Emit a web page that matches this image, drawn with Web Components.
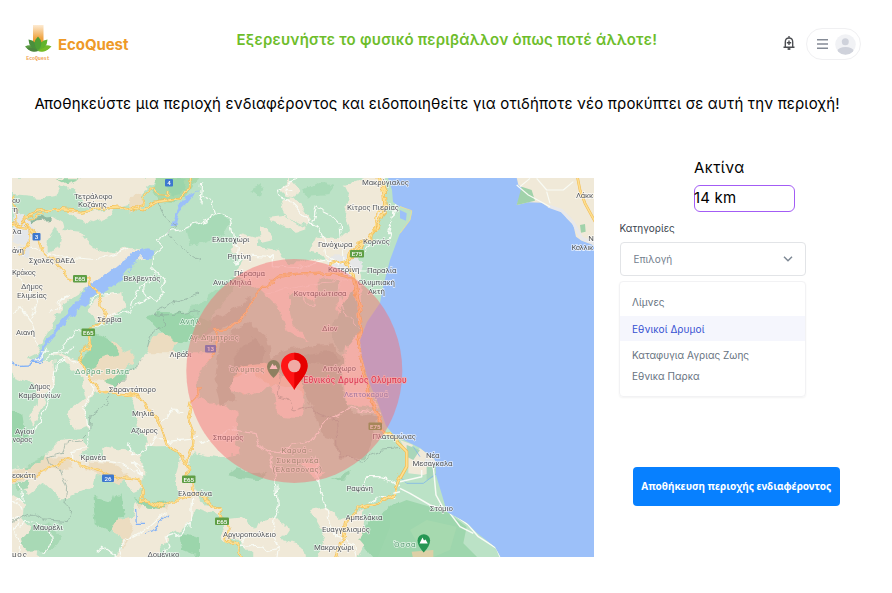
<!DOCTYPE html>
<html lang="el">
<head>
<meta charset="utf-8">
<title>EcoQuest</title>
<style>
html,body{margin:0;background:#fff;width:892px;height:593px;overflow:hidden;font-family:Inter,"Liberation Sans",sans-serif;color:#000}
</style>
</head>
<body>
<eco-page></eco-page>
<script>
const define=(name,html)=>customElements.define(name,class extends HTMLElement{
  constructor(){super();this.attachShadow({mode:"open"}).innerHTML=html;}
});

define("eco-brand",`<style>
:host{display:flex;align-items:center;gap:6px}
svg{display:block;margin-top:-3px}
b{font-size:15px;font-weight:700;color:#ee9a28;letter-spacing:-.08px;line-height:20px}
</style>
<svg width="28" height="38" viewBox="0 0 28 38">
<defs><linearGradient id="g" x1="0" y1="0" x2="0" y2="1"><stop offset="0" stop-color="#fdebd3"/><stop offset=".65" stop-color="#f0a544"/><stop offset="1" stop-color="#ec9420"/></linearGradient></defs>
<rect x="9" y="1" width="10.500" height="20" fill="url(#g)"/>
<path d="M1 22.500Q8 18.500 14 27Q6 28.500 1 22.500Z" fill="#5a9c42"/>
<path d="M27.500 22.500Q20 18.500 14 27Q22 28.500 27.500 22.500Z" fill="#72b92c"/>
<path d="M4.500 15.500Q13 16 14 27Q5 25 4.500 15.500Z" fill="#4a8f3c"/>
<path d="M23.500 15.500Q15 16 14 27Q23 25 23.500 15.500Z" fill="#62b32b"/>
<path d="M14 12.500Q21 19 14 27Q7 19 14 12.500Z" fill="#4f9f35"/>
<path d="M14 27Q8 22 3 24Q7 29.500 14 27Z" fill="#4d853f"/><path d="M14 27Q20 22 25 24Q21 29.500 14 27Z" fill="#74bb27"/>
<text x="2.200" y="36" font-size="4.800" font-weight="600" font-family="Liberation Mono,monospace" fill="#f0a050" textLength="23.500">EcoQuest</text>
</svg><b><slot></slot></b>`);

define("eco-bell",`<style>:host{display:block}svg{display:block;margin-top:-3px}</style>
<svg width="14" height="16" viewBox="0 0 14 16" fill="none" stroke="#4a4c50" stroke-width="1.350">
<path d="M3.300 11.600V7Q3.300 3 7 3Q10.700 3 10.700 7V11.600M1.500 12.200H12.500M7 1V3M7 5.500V10M4.800 7.750H9.200"/><path d="M5.600 14H8.400" stroke-width="1.800"/></svg>`);

define("eco-user",`<style>
:host{display:flex;box-sizing:border-box;width:55px;height:32px;margin-top:-1px;border:1.500px solid #f0f0f2;border-radius:16px;align-items:center;padding-left:10px;gap:7px}
svg{display:block}</style>
<svg width="11" height="12" viewBox="0 0 11 12" stroke="#858b96" stroke-width="1.500"><path d="M0 1.700H11M0 6H11M0 10.300H11"/></svg>
<svg width="21" height="21" viewBox="0 0 21 21"><defs><clipPath id="c"><circle cx="10.500" cy="10.500" r="10.300"/></clipPath></defs><circle cx="10.500" cy="10.500" r="10.300" fill="#f1f2f5"/><g fill="#cfd2db" clip-path="url(#c)"><circle cx="10.300" cy="7.800" r="3.500"/><ellipse cx="10.500" cy="17" rx="8.200" ry="4"/></g></svg>`);

define("eco-header",`<style>
:host{display:grid;grid-template-columns:212.500px 1fr auto;padding:22px 31px 0 24px;height:45px;align-items:center}
h1{margin:-9px 0 0;font-size:15px;line-height:20px;font-weight:600;color:#6dbd2a;letter-spacing:.22px;white-space:nowrap}
nav{display:flex;align-items:center;gap:10px}
</style><eco-brand>EcoQuest</eco-brand><h1><slot></slot></h1><nav><eco-bell></eco-bell><eco-user></eco-user></nav>`);

define("eco-radius",`<style>
:host{display:flex;flex-direction:column;margin-left:74.500px;width:101px}
label{font-size:15px;line-height:20px;letter-spacing:.5px}
div{box-sizing:border-box;margin-top:7px;height:26.500px;border:1.300px solid #a35cf5;border-radius:6px;font-size:15px;line-height:24px;letter-spacing:.2px;white-space:pre;text-indent:-1px}
</style><label>Ακτίνα</label><div><slot></slot></div>`);

define("eco-select",`<style>
:host{display:flex;flex-direction:column}
label{font-size:10px;line-height:14px;color:#3a434e}
div{box-sizing:border-box;margin-top:7.500px;width:186px;height:34px;border:1.300px solid #e2e4e7;border-radius:4px;display:flex;align-items:center;justify-content:space-between;padding:0 12px 0 13px;font-size:10px;color:#74818e}
svg{display:block}
</style><label>Κατηγορίες</label><div><span><slot></slot></span><svg width="10" height="6" viewBox="0 0 10 6" fill="none" stroke="#7d8894" stroke-width="1.500"><path d="M1 .8L5 4.700L9 .8"/></svg></div>`);

define("eco-option",`<style>
:host{display:flex;align-items:center;height:21.500px;padding-left:12px;font-size:10px;color:#67737f;white-space:nowrap}
:host([selected]){height:25px;background:#f5f6fd;color:#3752d2;margin:3px 0;letter-spacing:.1px}
</style><slot></slot>`);

define("eco-menu",`<style>
:host{display:block;box-sizing:border-box;width:187px;height:115.500px;margin-top:5px;margin-left:-.5px;border:1px solid #f2f2f4;border-radius:4px;box-shadow:0 1px 2px #0000000d;padding-top:9.500px}
</style><slot></slot>`);

define("eco-button",`<style>
:host{display:block;margin:70px 0 0 13px}
button{display:block;width:207.500px;height:39px;padding:0;border:0;border-radius:4px;background:#0780ff;color:#fff;font:700 10px "Noto Sans",sans-serif;white-space:nowrap}
</style><button><slot></slot></button>`);

/* Map palette: farmland, forest, minor roads, sea, highland. */
const B="#f0e9d8",D="#9bd5ab",W="#f8fbf5",S="#9cc0f9",T="#ecdcc0";
const labels=[
["Τετράλοφο",74,198.500,38.500],["Κοζάνης",78,207,29],["ου",12,202.500,8],["τη",12,211.500,6],["λα",12.500,234,9],["άνη",12,253,12],
["Σχολές ΟΑΕΔ",29,263,46],["Κρόκος",12,275,24],["Δήμος",21,288.500,22],["Ελιμείας",17,297.500,30],["Βελβεντός",123.500,280.500,37],["Σέρβια",97.500,321.500,24],["Αιανή",16,334.500,19],["Λιβάδι",169.500,356.500,22],
["Δήμος",29,389,21.500],["Καμβουνίων",18.500,397.500,42],["Σαραντάπορο",109,392,47],["Μηλιά",132,416,22],["Αζωρος",131,432.500,27],["Αγίου",15,433.500,19.500],["νορος",12.500,442,20],["Κρανέα",80.500,459.500,25.500],["εσκάτη",12,477.500,24],["Μαυρέλι",33,529.500,30],["μος",12,557,15],["Δομένικο",147.500,556.500,32],["Ελασσόνα",178,495.500,34],
["Ελατοχώρι",212,242,37.500],["Ρητίνη",227.500,259,23.500],["Πέρασμα",234,275.500,31],["Ανω Μηλιά",213,285,38.500],["Μακρύγιαλος",362,184.500,47],["Κίτρος Πιερίας",347,209.500,52],["Γανόχωρα",318,247,34.500],["Κορινός",363,243.500,27],["Κατερίνη",328,271.500,31.500],["Παραλία",367,272.500,29.500],["Ολυμπιακή",358,285,37],["Ακτή",368,294,17],["Κονταριώτισσα",293.500,296,53],["Δίον",322,330.500,15.500],["Λιτόχωρο",322.500,371,33.500],
["Σπαρμός",213,440,30.500],["Πλαταμώνας",372.500,439,43.500],["Ραψάνη",346.500,491,26.500],["Αμπελάκια",345.500,520,37],["Ευαγγελισμός",322,532,48],["Μακρυχώρι",314,550,40],["Αργυροπούλειο",223,536.500,53],
["Λάκκ",576,198,17.500],["Ν",588.300,240.500,5],["Καλλικ",571.500,249.500,22],["Νέα",426,457.500,13.500],["Μεσαγκαλα",412.500,466,40],["Στόμιο",430,511,23]
];
const parks=[["Δοβρα- Βαλτα",75,373.500,54],["Ανήλ",180,324,20],["Αγ. Δημητριος",189,340,50],["Όλυμπος",229.500,372,35],["Καρυά -",281.500,453,30],["Συκαμινέα",276.500,462.500,42],["(Ελασσόνας)",272.500,471.500,49.500],["Όσσα",394,546.500,21.500]];
const txt=(a,c)=>a.map(t=>`<text x="${t[1]}" y="${t[2]}" textLength="${t[3]}"${c?` fill="${c}"`:""}>${t[0]}</text>`).join("");
const sh=(x,y,w,t,c)=>`<rect x="${x}" y="${y}" width="${w}" height="7.500" rx="1" fill="${c}"/><text x="${x+w/2}" y="${y+6.100}" text-anchor="middle" fill="#fff" stroke="none" style="font-size:6.200px;font-weight:500">${t}</text>`;
const road=(d,w=1)=>`<path d="${d}" fill="none" stroke="#f3bd54" stroke-width="${9*w}"/><path d="${d}" fill="none" stroke="#fddf91" stroke-width="${5*w}"/>`;
const tile=(x,y,s)=>`<g transform="translate(${x} ${y}) scale(.33333)" stroke-linejoin="round">${s}</g>`;
const p=(c,...d)=>`<path fill="${c}" d="${d.join("")}"/>`;
const l=(c,w,...d)=>`<path fill="none" stroke="${c}" stroke-width="${w}" d="${d.join("")}"/>`;

const nw=
p(B,"M30 20H470L455 45L430 65L420 90L350 110L300 118L245 95L225 60L180 45L165 80L140 85L30 75Z")+
p("#a8d9ac","M470 20H600L560 80L520 100L480 95L455 60Z")+p(D,"M500 30L560 25L550 65L510 75Z","M170 25L240 25L200 40Z")+
p(B,"M30 170L110 150L160 140L190 160L195 180L240 185L265 215L290 235L340 250L380 232L430 240L440 260L330 310L270 350L190 400L110 550L60 575L30 580Z")+
p("#bbe2c6","M140 215L165 175L185 190L175 235L140 245Z","M30 165L60 150L120 135L100 155L60 180L30 175Z")+
p(B,"M190 115L250 130L340 115L330 140L280 160L235 150Z","M270 400L310 370L370 360L375 410L330 450L290 455L260 420Z")+
p(T,"M395 85L425 70L425 110L385 125Z","M465 500L500 485L540 495L520 540L530 570L430 600L440 550Z","M300 540L340 510L365 540L360 600H290Z")+
p(D,"M440 440L480 425L570 430L640 460L600 500L540 520L470 480Z","M280 490L330 510L360 560L320 600H240Z")+
l("#91b9a1",9,"M75 165L110 150L155 145")+
p("#e4e7e9","M40 120L90 150L105 190L80 230L40 215Z","M60 230L90 235L80 265L55 255Z")+
p(S,"M125 535L180 455L240 385L270 345L320 315L360 280L400 248L440 235L465 240L450 260L420 262L370 320L320 360L285 375L250 405L215 435L185 475L130 540L125 575L85 590L110 570L115 545Z","M600 60L585 75L560 105L540 125L530 165L515 165L525 135L535 115L560 80Z")+
l(W,3.200,"M40 305L95 360L110 400L90 450L120 530M40 425L60 410L90 455M35 580L110 570L140 540M90 230L180 260L300 270L390 235M170 400L200 380L150 430M120 580L180 540L225 480L265 485L310 460M120 545L190 550L225 530M265 400L295 370L360 365M400 410L430 395L445 380L470 395L490 370L480 345L500 330L470 310L450 290L455 260L490 230L470 210L520 180L560 175L580 165L600 160M310 445L390 420L410 360L440 340M440 385L430 350L460 320")+
l("#8da79b",2,'M470 100L495 140L530 165L505 190L530 220L560 240L600 270M600 370L520 400L465 430L495 435L600 425M490 435L490 465L460 480L445 540')+
road("M30 160L60 165L85 135L160 115L245 127L310 112L360 108L425 122L460 97L540 85L570 55L575 20")+
road("M50 165L45 110L35 80M30 165L85 175L90 215L60 255M85 150L130 135M425 100L435 70L460 55L475 72L498 75L500 60M395 115L430 100",.7)+
road("M70 155L95 185L115 200L125 240L160 270L205 325L220 328M250 325L270 325L275 345L290 365L315 430L305 455L265 485L270 520L245 550L245 590",.75);

const sw=
p(B,"M30 -20H60L90 0L160 0L165 60L140 110L100 195L85 165L110 140L115 80L60 60L30 40Z","M160 -20L240 0L280 50L330 60L400 30L440 -20H640L590 60L600 230L560 330L570 350L600 420L560 500L520 520L485 560L470 600H330L370 560L330 490L400 470L410 430L500 440L550 410L520 370L540 280L510 260L440 265L430 220L395 130L400 105L290 100L250 140L265 200L230 210L200 160L260 110L240 40L200 10Z")+
p("#bbe2c6","M380 280L440 260L510 265L540 300L520 370L545 410L500 435L430 410L430 370L380 350L385 310Z")+
p(B,"M130 290L180 240L240 230L260 270L240 290L305 300L310 260L350 270L420 280L430 320L430 380L400 395L370 360L290 340L280 380L205 415L180 415L130 370L85 405L30 330L70 320Z")+
p(T,"M30 340L75 320L130 290L210 295L215 325L150 330L110 350L30 370Z","M255 330L275 305L340 310L385 345L360 370L290 345Z","M420 430L510 435L490 470L440 490L420 470Z","M290 0L400 -30V10L320 70L270 50Z","M330 490L380 470L400 510L370 560Z")+
p(B,"M30 400L75 430L70 480L90 500L80 540L130 600H30Z","M430 430L500 450L510 540L430 600H360L400 520Z")+
p(D,"M30 150L70 165L80 240L30 250Z","M280 410L330 425L365 400L370 460L350 480L330 515L290 490Z","M400 410L470 430L510 425L495 445L440 440Z","M540 520L600 535V590L550 570Z","M310 65L390 30L350 80Z")+
p("#a8d9b5","M60 545L90 505L145 490L180 530L160 570L90 575Z","M70 320L135 285L130 300L75 330Z","M50 365L88 365L85 385L55 390Z")+
l("#83b2f7",4,"M30 5L50 20L80 18L100 3L130 5M435 525L470 510L485 480L510 460M410 450L412 490L435 490")+
l(W,3.600,"M200 5L170 15L160 60L140 130L110 200L80 230M165 10L200 -5L240 10M275 75L280 95L245 145L260 180L270 240L250 270L215 275L215 300M290 300L370 310L425 350L400 310L430 320M550 155L520 150L475 190M380 245L395 265L395 285L440 265L470 230L500 245L600 235M570 500L575 420M480 600L510 560L500 535L545 520L575 480M355 600L370 545L450 500L500 455M290 580L310 565L350 590M35 480L60 470L40 510L60 540L55 590M50 505L80 480L150 505L155 545L130 580M60 370L70 420L40 430L70 450")+
l("#8da79b",2,"M430 0L395 30L350 80L320 100L320 130L270 165L265 215L240 240L200 245L190 280L140 290L150 315L180 325L200 380L195 430L215 450L205 485L140 480L90 460L35 485")+
road("M243 -5L265 45L300 95L410 103L440 145L470 170L490 225L500 255L535 275L565 320L560 350M575 370L580 410",.85)+
road("M30 358L110 347L145 325L205 298L290 335L365 355L410 358L428 370L428 420L485 440L545 415L600 400M600 80L575 130L565 175L580 215L575 270L560 310",.75);

const nc=
p("#a8dab7","M-40 180L0 160L60 130L90 160L70 195L20 215L-30 225Z","M310 60L350 38L400 50L390 75L330 80Z","M150 60L190 42L180 80Z","M-60 440L0 400L40 370L100 320L110 340L0 500Z")+
p(B,"M240 60L265 20L300 60L285 85L260 80Z","M240 90L280 85L330 145L320 170L245 130Z","M210 140L250 135L320 175L290 185L220 155Z","M175 165L210 180L220 210L180 220Z","M90 245L125 190L180 205L170 230L240 240L260 280L300 280L330 265L380 280L360 250L330 245L350 200L420 205L450 180L435 130L450 85L430 45L500 20H550L560 90L520 190L460 250L470 270L480 320L490 600H430L440 520L400 500L410 420L430 380L420 340L380 320L350 330L350 395L270 370L270 420L280 460L330 520L260 480L240 420L190 370L150 340L100 320L130 270Z")+
p("#e6e7e8","M380 280L410 250L450 260L480 280L470 310L430 325L400 310Z")+
p("#a9d6ba","M410 430L460 360L475 430L480 480L430 540L410 520L390 500Z")+
p("#a9cbaf","M110 410L150 380L135 440L60 480L0 500V470Z")+
p("#a9cbaf","M60 520L100 480L150 455L200 500L215 560L300 530L400 520L430 560L430 640H40Z")+
p("#9dbfa3","M100 560L160 500L190 540L180 600L110 620Z","M300 560L400 540L420 580L330 600Z")+
l(W,3.600,"M300 20L270 30L235 65L240 85L265 90L330 160L345 160L370 210L380 260L420 285M265 75L255 60L280 65M335 155L350 110L390 130L420 160L425 220L430 280M0 80L40 90L50 130L20 150L0 160M50 130L90 145L100 200L90 210L115 235L110 285L140 255L220 260L220 290L285 295L380 275L420 285M5 40L0 100M470 270L500 230L560 210L590 100M390 290L450 300L530 300")+
l("#f6f2ec",2.500,"M430 300L420 360L430 420L480 480M200 370L280 350L350 340L460 330M300 370L320 400L350 400")+
road("M530 15L555 60L558 110L525 180L480 230L440 280L460 320L475 400L485 450L478 510L490 600",1.150)+
road("M490 210L455 240L440 280M560 110L530 130L515 210M460 325L400 310L300 313L235 320L190 355L145 400L140 430L100 465L85 480L50 480L45 550L5 585M385 285L440 270",.75);

const sc=
p(T,"M90 60L120 20L200 10L240 50L290 40L320 80L300 130L260 120L230 70L130 110Z")+
p(B,"M-40 100L30 125L80 140L110 155L105 260L130 280L50 295L0 285L-40 260Z","M90 60L140 30L200 70L230 130L230 170L310 175L320 120L285 80L230 70L140 110L90 90Z","M430 -20H490L500 90L540 150L490 140L440 140L430 60Z","M330 450L380 440L430 480L490 450L500 540L470 600H350L375 530Z","M60 480L140 470L165 510L175 485L235 475L270 510L250 540L310 560L320 600H170L110 540L70 540Z","M-20 420L60 440L70 470L-20 440Z","M300 315L345 310L380 340L350 350Z")+
p("#a9cbaf","M320 10L420 20L430 90L440 150L530 170L500 290L420 300L400 240L370 230L340 150L310 80Z","M40 60L85 -10L110 30L90 80L110 120L60 140Z")+
p("#9fd2ae","M85 345L110 325L160 340L200 335L170 360L120 355Z","M395 360L450 330L440 355Z")+
p(D,"M500 490L600 420V600H530L480 540Z")+
l(W,3.600,"M0 250L40 235L100 210L165 220L175 255L210 275L260 280L280 250L340 240L370 190L450 145L540 160M210 280L215 310L230 370L235 440L220 480L215 520L235 560L230 600M345 290L355 370L365 410L380 450L385 490L410 530L460 550L470 600M490 375L500 350L540 350L570 360L600 380M500 430L540 410L580 410M140 530L120 560L185 555L200 570L240 560")+
l("#8da79b",2,"M240 50L235 110L270 120L280 150L330 140L350 160L410 180L415 290L490 300L550 270L600 265")+
road("M480 -10L500 60L510 120L550 210L600 255",1.150)+road("M600 350L580 400L540 430L475 445L435 490L430 530L405 600M0 405L25 420L40 440L60 440L70 475L85 500L80 535L110 560L125 600",.9);

const farEast=p("#bbe2c6","M0 108L37 125L30 150L0 190L-20 220Z")+p(S,"M0 120L20 130L18 152L0 145Z")+l("#e4dda1",3,"M0 110L35 122L30 150L0 190");
const ne=p(B,"M345 0H605V235L545 212L528 200L520 165L500 145L485 122L445 112L425 98L385 97L350 105L370 55L355 45Z")+p("#a1d2aa","M365 50L395 60L405 92L350 105Z","M540 165L555 162L557 185L543 188Z")+l("#e8e8ea",10,"M445 108L485 122L520 158L545 205L590 222")+l(W,3.500,"M350 45L385 75L450 110M360 50L390 25M410 25L440 60L490 60L520 35M440 65L450 100")+road("M530 10L540 60L555 100L585 155",.9);
const se=
p(B,"M25 290L60 265L105 295L100 335L70 345L25 340Z","M0 240L40 255L20 275Z")+p("#e5e7e6","M75 295L108 300L100 320L75 315Z")+
p("#9ed6ad","M-30 440L20 420L90 440L140 455L200 500L190 550L240 600H-70L-30 500Z")+p("#a9d6ba","M20 255L60 270L40 300L20 290Z","M80 320L108 320L105 350L80 360Z")+
p("#a6d9af","M80 480L170 500L150 570L80 600L30 510Z")+p("#ddd0a7","M35 575L100 570L100 600H40Z")+
l("#82b8e8",2.500,"M0 350L20 370L70 370L110 340M40 260L60 290")+
l(W,4.500,"M0 385L30 400L90 435L150 455L205 495L235 530L290 565L300 590M0 365L65 350L65 330M100 320L108 405L130 445M150 460L180 500L220 520M0 395L-20 400")+
road("M-10 245L20 275L20 320L0 355",1.100);

define("eco-map",`<style>
:host{display:block;width:582px;height:379.500px;overflow:hidden}
svg{display:block}
text{font-family:Roboto,"Noto Sans",sans-serif;font-size:7.900px;paint-order:stroke}
</style>
<svg width="582" height="379.500" viewBox="12 178 582 379.500">
<filter id="rough" filterUnits="userSpaceOnUse" x="0" y="160" width="610" height="410"><feTurbulence type="fractalNoise" baseFrequency=".09" numOctaves="3" seed="4"/><feDisplacementMap in="SourceGraphic" scale="9" xChannelSelector="R" yChannelSelector="G"/></filter>
<rect x="12" y="178" width="582" height="380" fill="#bbe2c6"/>
<g filter="url(#rough)">
${tile(200,170,nc)}${tile(200,360,sc)}
${tile(0,170,nw)}${tile(0,360,sw)}
</g>
<path fill="${S}" d="M388 178L392 190L393 202L400 207L411 212L409 220L400 233L390 260L383 287L380 303L367 322L360 340L362 357L368 380L378 403L386 426L393 434L400 438L420 448L435 460L436 475L442 495L447 512L467 523L477 533L495 547L501 558H594V178Z"/>
${tile(400,170,farEast+ne)}
<clipPath id="land"><path d="M300 420L386 426L393 434L400 438L420 448L435 460L436 475L442 495L447 512L467 523L477 533L495 547L501 558H300Z"/></clipPath>
<g clip-path="url(#land)">${tile(400,360,se)}</g>
<g fill="#55585c" stroke="#ffffffb0" stroke-width="1.500">${txt(labels)}${txt(parks,"#5c9f74")}<text x="344" y="397" textLength="44" fill="#5a82c8">Λεπτοκαρυά</text></g>
<g>${sh(165,179,8,"4","#3c77cf")}${sh(32.500,233,8,"3","#3c77cf")}${sh(73,275,14,"E65","#5f9e45")}${sh(81.500,328.500,13.500,"E65","#5f9e45")}${sh(102,474.500,12,"26","#3c77cf")}${sh(182,475.500,13.500,"E65","#5f9e45")}${sh(350,250,14,"E75","#5f9e45")}${sh(205,345,11,"13","#3c77cf")}${sh(215,517.500,14,"E65","#5f9e45")}${sh(368.500,422.500,13.500,"E75","#5f9e45")}</g>
<g fill="#2e9152"><path d="M273.500 378Q267 372 267 366.500A6.500 6.500 0 0 1 280 366.500Q280 372 273.500 378Z"/><path fill="#fff" d="M269.500 369L272.500 363.500L274 366L275.500 365L277.500 369Z"/>
<path fill="#259653" d="M423.700 552.500Q417.500 546 417.500 540.500A6.300 6.300 0 0 1 430.100 540.500Q430.100 546 423.700 552.500Z"/><path fill="#fff" d="M419.500 543.500L422.500 537.500L424 540.500L425.500 539.500L427.800 543.500Z"/></g>
<ellipse cx="294.300" cy="371" rx="108" ry="112" fill="#f66e70" fill-opacity=".48"/>
<text x="303.500" y="383" textLength="103" style="font-size:8.300px" fill="#d9354f" stroke="#f7a9a8" stroke-width="1.400">Εθνικός Δρυμός Ολύμπου</text>
<path fill="#ff1414" d="M294.300 390C291 383 281 375 281 366A13.300 13.300 0 0 1 307.600 366C307.600 375 297.500 383 294.300 390Z"/><path fill="#e60000" d="M294.300 352.700A13.300 13.300 0 0 1 307.600 366C307.600 375 297.500 383 294.300 390Z"/><circle cx="294.300" cy="366" r="6.300" fill="#f1aaa4"/>
</svg>`);

define("eco-page",`<style>
:host{display:block;width:892px;height:593px;background:#fff}
p{margin:27px 0 0 34.500px;font-size:15px;line-height:20px;letter-spacing:.175px;white-space:nowrap}
main{display:flex;padding:44px 0 0 12px;align-items:flex-start}
eco-map{margin-top:19.500px}
aside{display:flex;flex-direction:column;padding-left:25.500px}
eco-select{margin-top:9px}
</style>
<eco-header>Εξερευνήστε το φυσικό περιβάλλον όπως ποτέ άλλοτε!</eco-header>
<p><span>Αποθηκεύστε μια περιοχή ενδιαφέροντος και ειδοποιηθείτε για οτιδήποτε νέο προκύπτει σε αυτή την περιοχή!</span></p>
<main><eco-map></eco-map><aside>
<eco-radius>14 km</eco-radius>
<eco-select>Επιλογή</eco-select>
<eco-menu><eco-option>Λίμνες</eco-option><eco-option selected>Εθνικοί Δρυμοί</eco-option><eco-option>Καταφυγια Αγριας Ζωης</eco-option><eco-option>Εθνικα Παρκα</eco-option></eco-menu>
<eco-button>Αποθήκευση περιοχής ενδιαφέροντος</eco-button>
</aside></main>`);
</script>
</body>
</html>
